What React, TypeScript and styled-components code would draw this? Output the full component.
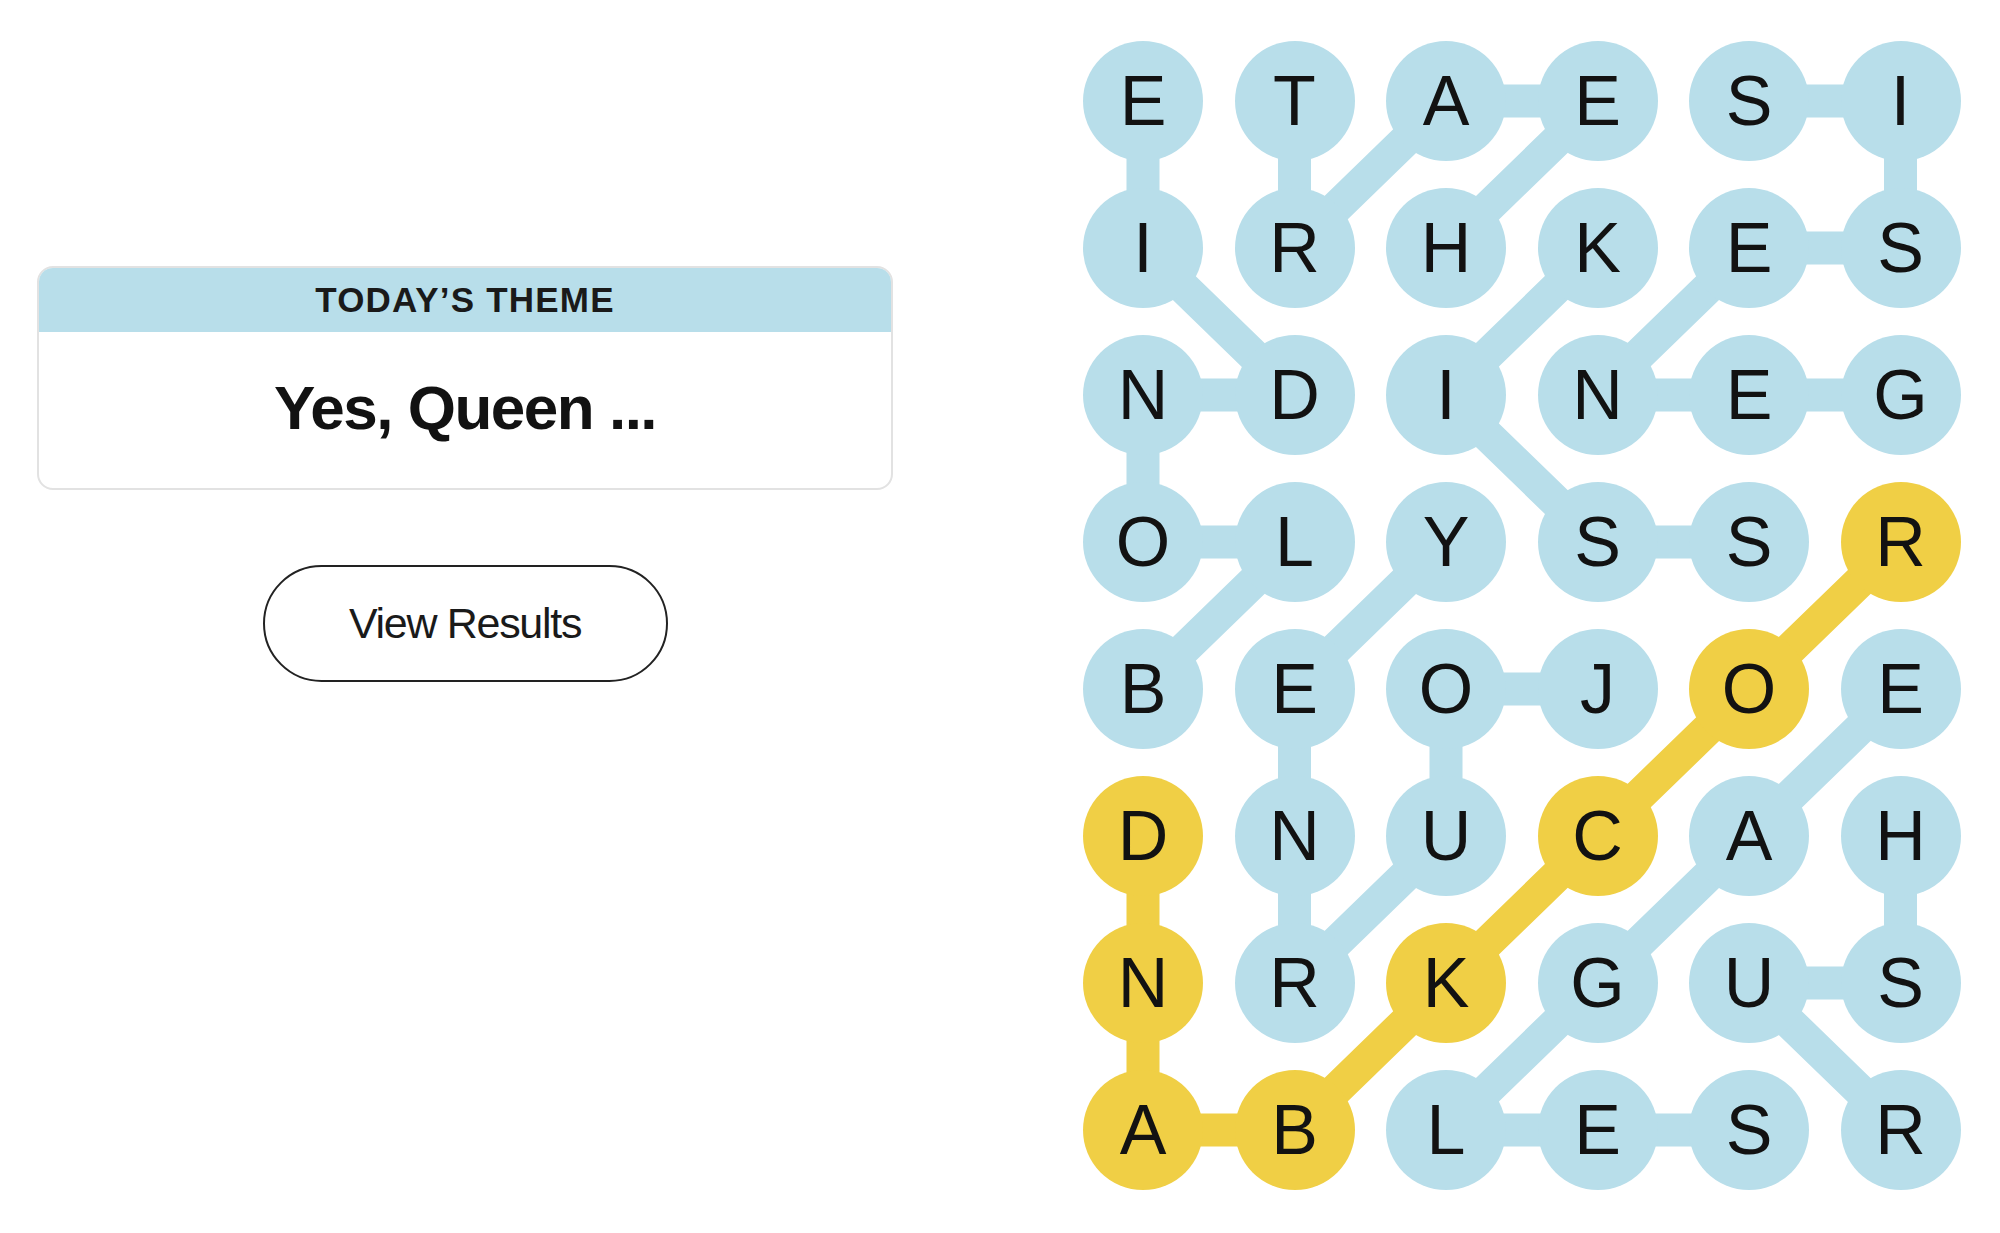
import React from 'react';
import styled, { createGlobalStyle } from 'styled-components';

const BLUE = '#b8deea';
const YELLOW = '#f0cf45';
const INK = '#121212';

// board geometry
const CELL = 120;
const COL_PITCH = 151.5;
const ROW_PITCH = 147;

const GRID = [
  'ETAESI',
  'IRHKES',
  'NDINEG',
  'OLYSSR',
  'BEOJOE',
  'DNUCAH',
  'NRKGUS',
  'ABLESR',
];

type Cell = [number, number]; // [row, col]

interface Word {
  path: Cell[];
  spangram?: boolean;
}

const WORDS: Word[] = [
  // BLONDIE
  { path: [[4, 0], [3, 1], [3, 0], [2, 0], [2, 1], [1, 0], [0, 0]] },
  // HEART
  { path: [[1, 2], [0, 3], [0, 2], [1, 1], [0, 1]] },
  // GENESIS
  { path: [[2, 5], [2, 4], [2, 3], [1, 4], [1, 5], [0, 5], [0, 4]] },
  // KISS
  { path: [[1, 3], [2, 2], [3, 3], [3, 4]] },
  // JOURNEY
  { path: [[4, 3], [4, 2], [5, 2], [6, 1], [5, 1], [4, 1], [3, 2]] },
  // EAGLES
  { path: [[4, 5], [5, 4], [6, 3], [7, 2], [7, 3], [7, 4]] },
  // RUSH
  { path: [[7, 5], [6, 4], [6, 5], [5, 5]] },
  // ROCKBAND
  { path: [[3, 5], [4, 4], [5, 3], [6, 2], [7, 1], [7, 0], [6, 0], [5, 0]], spangram: true },
];

const spangramCells = new Set(
  WORDS.filter((w) => w.spangram).flatMap((w) => w.path.map(([r, c]) => `${r}-${c}`)),
);

const GlobalStyle = createGlobalStyle`
  html, body {
    margin: 0;
    padding: 0;
    background: #ffffff;
  }
  body {
    font-family: "Liberation Sans", Arial, sans-serif;
    color: ${INK};
  }
`;

const Page = styled.div`
  display: flex;
  flex-direction: row;
  align-items: flex-start;
  gap: 190px;
  padding: 41px 0 0 37px;
  min-height: 100vh;
  box-sizing: border-box;
`;

const Sidebar = styled.div`
  width: 856px;
  padding-top: 225px;
  display: flex;
  flex-direction: column;
  align-items: center;
`;

const ThemeCard = styled.div`
  width: 100%;
  box-sizing: border-box;
  border: 2px solid #e2e2e2;
  border-radius: 16px;
  overflow: hidden;
  background: #fff;
`;

const ThemeHeader = styled.div`
  height: 64px;
  background: ${BLUE};
  display: flex;
  align-items: center;
  justify-content: center;
  font-size: 35px;
  font-weight: 700;
  letter-spacing: 1.2px;
  text-transform: uppercase;
  color: #1a1a1a;
`;

const ThemeBody = styled.div`
  height: 156px;
  display: flex;
  align-items: center;
  justify-content: center;
  font-size: 62px;
  font-weight: 700;
  letter-spacing: -1.5px;
  padding-bottom: 6px;
  box-sizing: border-box;
`;

const ResultsButton = styled.button`
  margin-top: 75px;
  width: 405px;
  height: 117px;
  border: 2px solid #222;
  border-radius: 59px;
  background: #fff;
  font-family: "Liberation Sans", Arial, sans-serif;
  font-size: 43px;
  letter-spacing: -1.3px;
  color: #1a1a1a;
  cursor: pointer;
`;

const Board = styled.div`
  position: relative;
  display: grid;
  grid-template-columns: repeat(6, ${CELL}px);
  grid-auto-rows: ${CELL}px;
  column-gap: ${COL_PITCH - CELL}px;
  row-gap: ${ROW_PITCH - CELL}px;
`;

const Links = styled.svg`
  position: absolute;
  inset: 0;
  width: 100%;
  height: 100%;
  pointer-events: none;
`;

const Letter = styled.div<{ $found: boolean }>`
  position: relative;
  width: ${CELL}px;
  height: ${CELL}px;
  border-radius: 50%;
  background: ${(p) => (p.$found ? YELLOW : BLUE)};
  display: flex;
  align-items: center;
  justify-content: center;
  font-size: 70px;
  line-height: 1;
  color: ${INK};
`;

const centre = ([r, c]: Cell) => ({ x: CELL / 2 + c * COL_PITCH, y: CELL / 2 + r * ROW_PITCH });

const App = () => {
  return (
    <Page>
      <GlobalStyle />
      <Sidebar>
        <ThemeCard>
          <ThemeHeader>Today’s Theme</ThemeHeader>
          <ThemeBody>Yes, Queen ...</ThemeBody>
        </ThemeCard>
        <ResultsButton>View Results</ResultsButton>
      </Sidebar>
      <Board>
        <Links>
          {WORDS.map((w, i) => (
            <polyline
              key={i}
              points={w.path.map((p) => `${centre(p).x},${centre(p).y}`).join(' ')}
              fill="none"
              stroke={w.spangram ? YELLOW : BLUE}
              strokeWidth={33}
            />
          ))}
        </Links>
        {GRID.flatMap((row, r) =>
          row.split('').map((ch, c) => (
            <Letter key={`${r}-${c}`} $found={spangramCells.has(`${r}-${c}`)}>
              {ch}
            </Letter>
          )),
        )}
      </Board>
    </Page>
  );
};

export default App;
